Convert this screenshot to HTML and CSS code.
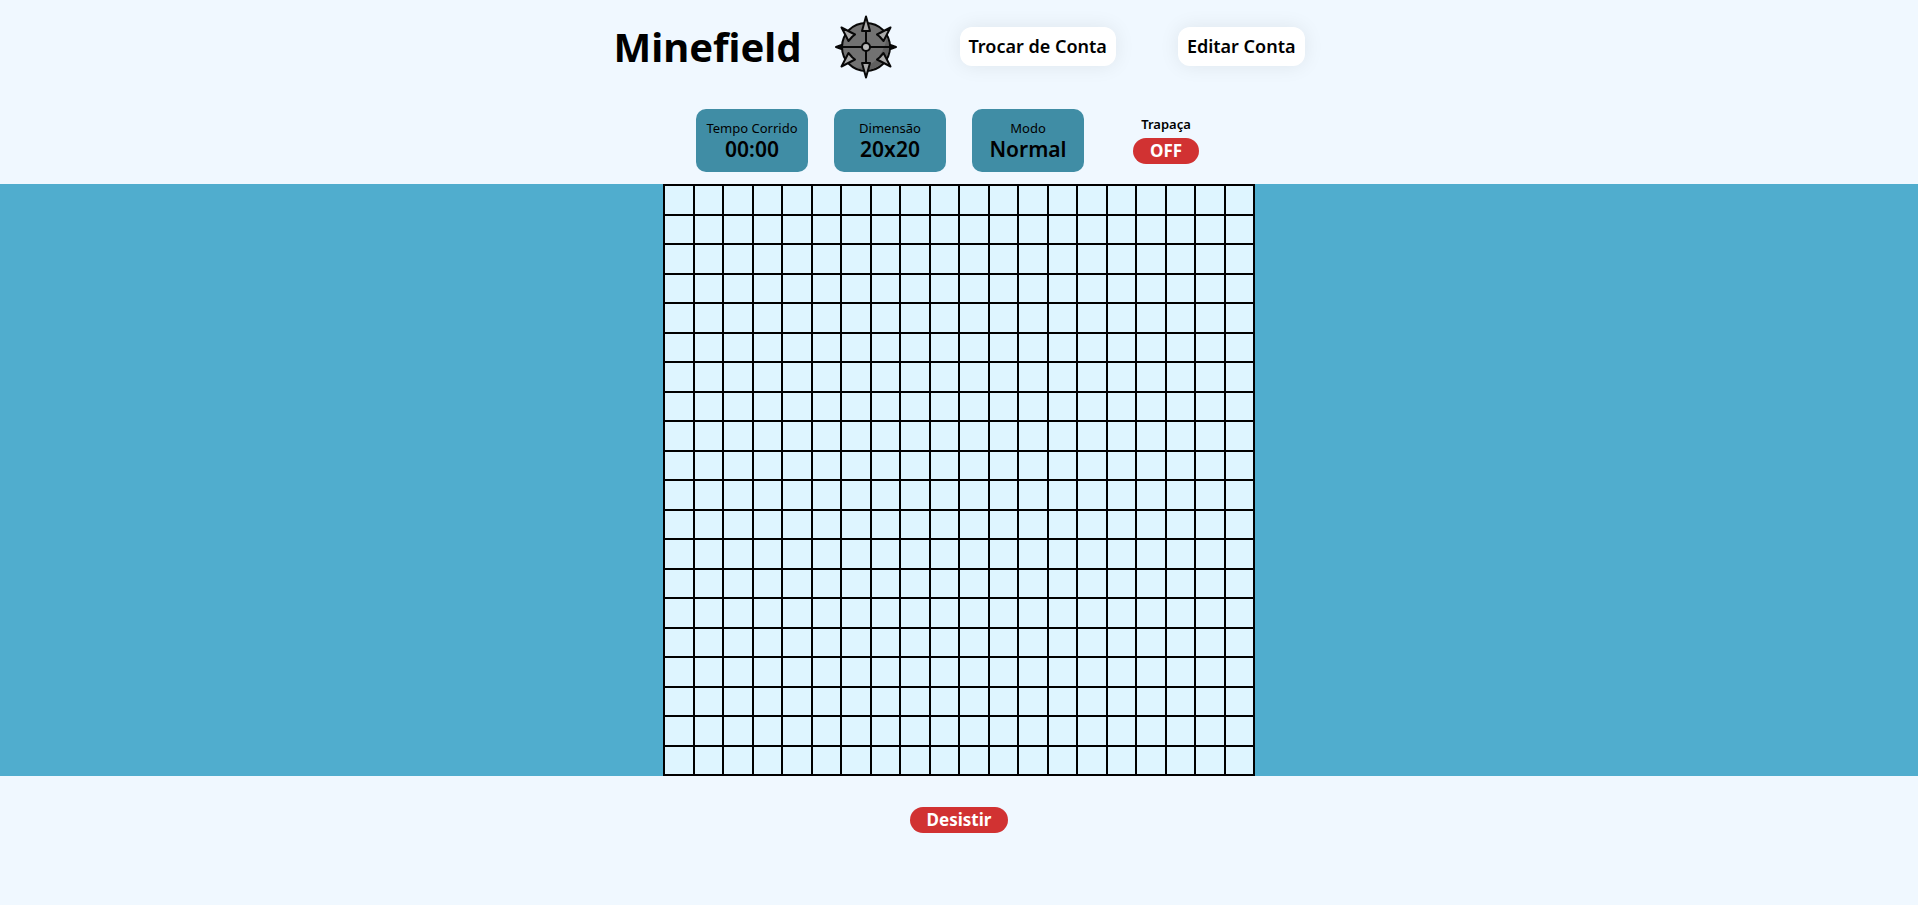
FILE: index.html
```html
<!DOCTYPE html>
<html lang="pt">
<head>
<meta charset="utf-8">
<title>Minefield</title>
<link rel="stylesheet" href="styles.css">
</head>
<body>
<header class="header">
  <div class="brand">
    <h1 class="title">Minefield</h1>
    <svg class="mine" viewBox="0 0 64 64" aria-hidden="true">
      <defs>
        <path id="spike" d="M32 1.500 L36 16 H28 Z"/>
        <path id="diagonal" d="M7.500 12.500 L21 19.500 L18.500 21.500 L18 22 L14.500 26 Z"/>
      </defs>
      <g stroke="#080808" stroke-width="2" stroke-linejoin="round" stroke-linecap="round">
        <path fill="#aaa" d="M2 32 L9 29.500 V34.500 Z M62 32 L55 29.500 V34.500 Z"/>
        <circle cx="32" cy="32" r="24" fill="#727272"/>
        <path fill="#606060" stroke="none" d="M53 23 A23 23 0 0 1 23 53 Q46 52 53 23"/>
        <path fill="none" d="M32 12 V52 M4 32 H60"/>
        <g fill="#aaa">
          <use href="#spike"/>
          <use href="#spike" transform="rotate(180 32 32)"/>
          <use href="#diagonal"/>
          <use href="#diagonal" transform="translate(64 0) scale(-1 1)"/>
          <use href="#diagonal" transform="translate(0 64) scale(1 -1)"/>
          <use href="#diagonal" transform="translate(64 64) scale(-1 -1)"/>
          <circle cx="32" cy="32" r="4" fill="#bbb"/>
        </g>
      </g>
    </svg>
  </div>
  <button class="account" type="button">Trocar de Conta</button>
  <button class="account" type="button">Editar Conta</button>
</header>
<main>
  <section class="stats">
    <div class="card"><span class="label">Tempo Corrido</span><strong class="value">00:00</strong></div>
    <div class="card"><span class="label">Dimensão</span><strong class="value">20x20</strong></div>
    <div class="card"><span class="label">Modo</span><strong class="value">Normal</strong></div>
    <div class="cheat"><span class="cheat-label" id="cheat">Trapaça</span><button class="pill" type="button" aria-labelledby="cheat">OFF</button></div>
  </section>
  <section class="field"><div class="board" id="board"></div></section>
  <div class="actions"><button class="pill" type="button">Desistir</button></div>
</main>
<script src="board.js"></script>
</body>
</html>
```
FILE: styles.css
```css
* {
  box-sizing: border-box;
}

body {
  margin: 0;
  background: #f0f8ff;
  color: #000;
  font-family: "Noto Sans", sans-serif;
}

button {
  border: 0;
  font-family: inherit;
  cursor: pointer;
}

.header {
  display: flex;
  justify-content: center;
  align-items: center;
  gap: 62px;
  height: 93px;
}

.brand {
  display: flex;
  align-items: center;
  gap: 32px;
}

.title {
  margin: 0;
  font-size: 40px;
  line-height: 48px;
}

.mine {
  width: 64px;
  height: 64px;
}

.account {
  padding: 8px 9px;
  border-radius: 12px;
  background: #fff;
  color: #000;
  font-size: 18px;
  font-weight: 600;
  line-height: 23px;
  box-shadow: 0 0 20px rgba(0, 0, 0, 0.08);
}

.stats {
  display: grid;
  grid-template-columns: repeat(4, 112px);
  justify-content: center;
  gap: 26px;
  padding: 16px 0 12px;
}

.card,
.cheat {
  display: flex;
  flex-direction: column;
  align-items: center;
}

.card {
  padding: 10px 0 11px;
  border-radius: 10px;
  background: #408da5;
}

.label {
  font-size: 13px;
  line-height: 18px;
}

.value {
  font-size: 21px;
  font-weight: 600;
  line-height: 24px;
}

.cheat {
  padding-top: 6px;
  gap: 5px;
}

.cheat-label {
  font-size: 13px;
  font-weight: 600;
  line-height: 18px;
}

.pill {
  padding: 0 17px;
  border-radius: 14px;
  background: #d13232;
  color: #fff;
  font-size: 17px;
  font-weight: 700;
  line-height: 26px;
}

.field {
  display: flex;
  justify-content: center;
  background: #50adce;
}

.board {
  display: grid;
  grid-template-columns: repeat(20, 1fr);
  grid-template-rows: repeat(20, 1fr);
  gap: 2px;
  width: min(592px, 100%);
  aspect-ratio: 1;
  padding: 2px;
  background: #000;
}

.cell {
  min-width: 0;
  padding: 0;
  background: #def5ff;
}

.actions {
  display: flex;
  justify-content: center;
  padding: 31px 0;
}
```
FILE: board.js
```js
const board = document.getElementById("board");
for (let i = 0; i < 400; i++) {
  const cell = document.createElement("button");
  cell.type = "button";
  cell.className = "cell";
  cell.setAttribute("aria-label", `Linha ${Math.floor(i / 20) + 1}, coluna ${i % 20 + 1}`);
  board.append(cell);
}
```
